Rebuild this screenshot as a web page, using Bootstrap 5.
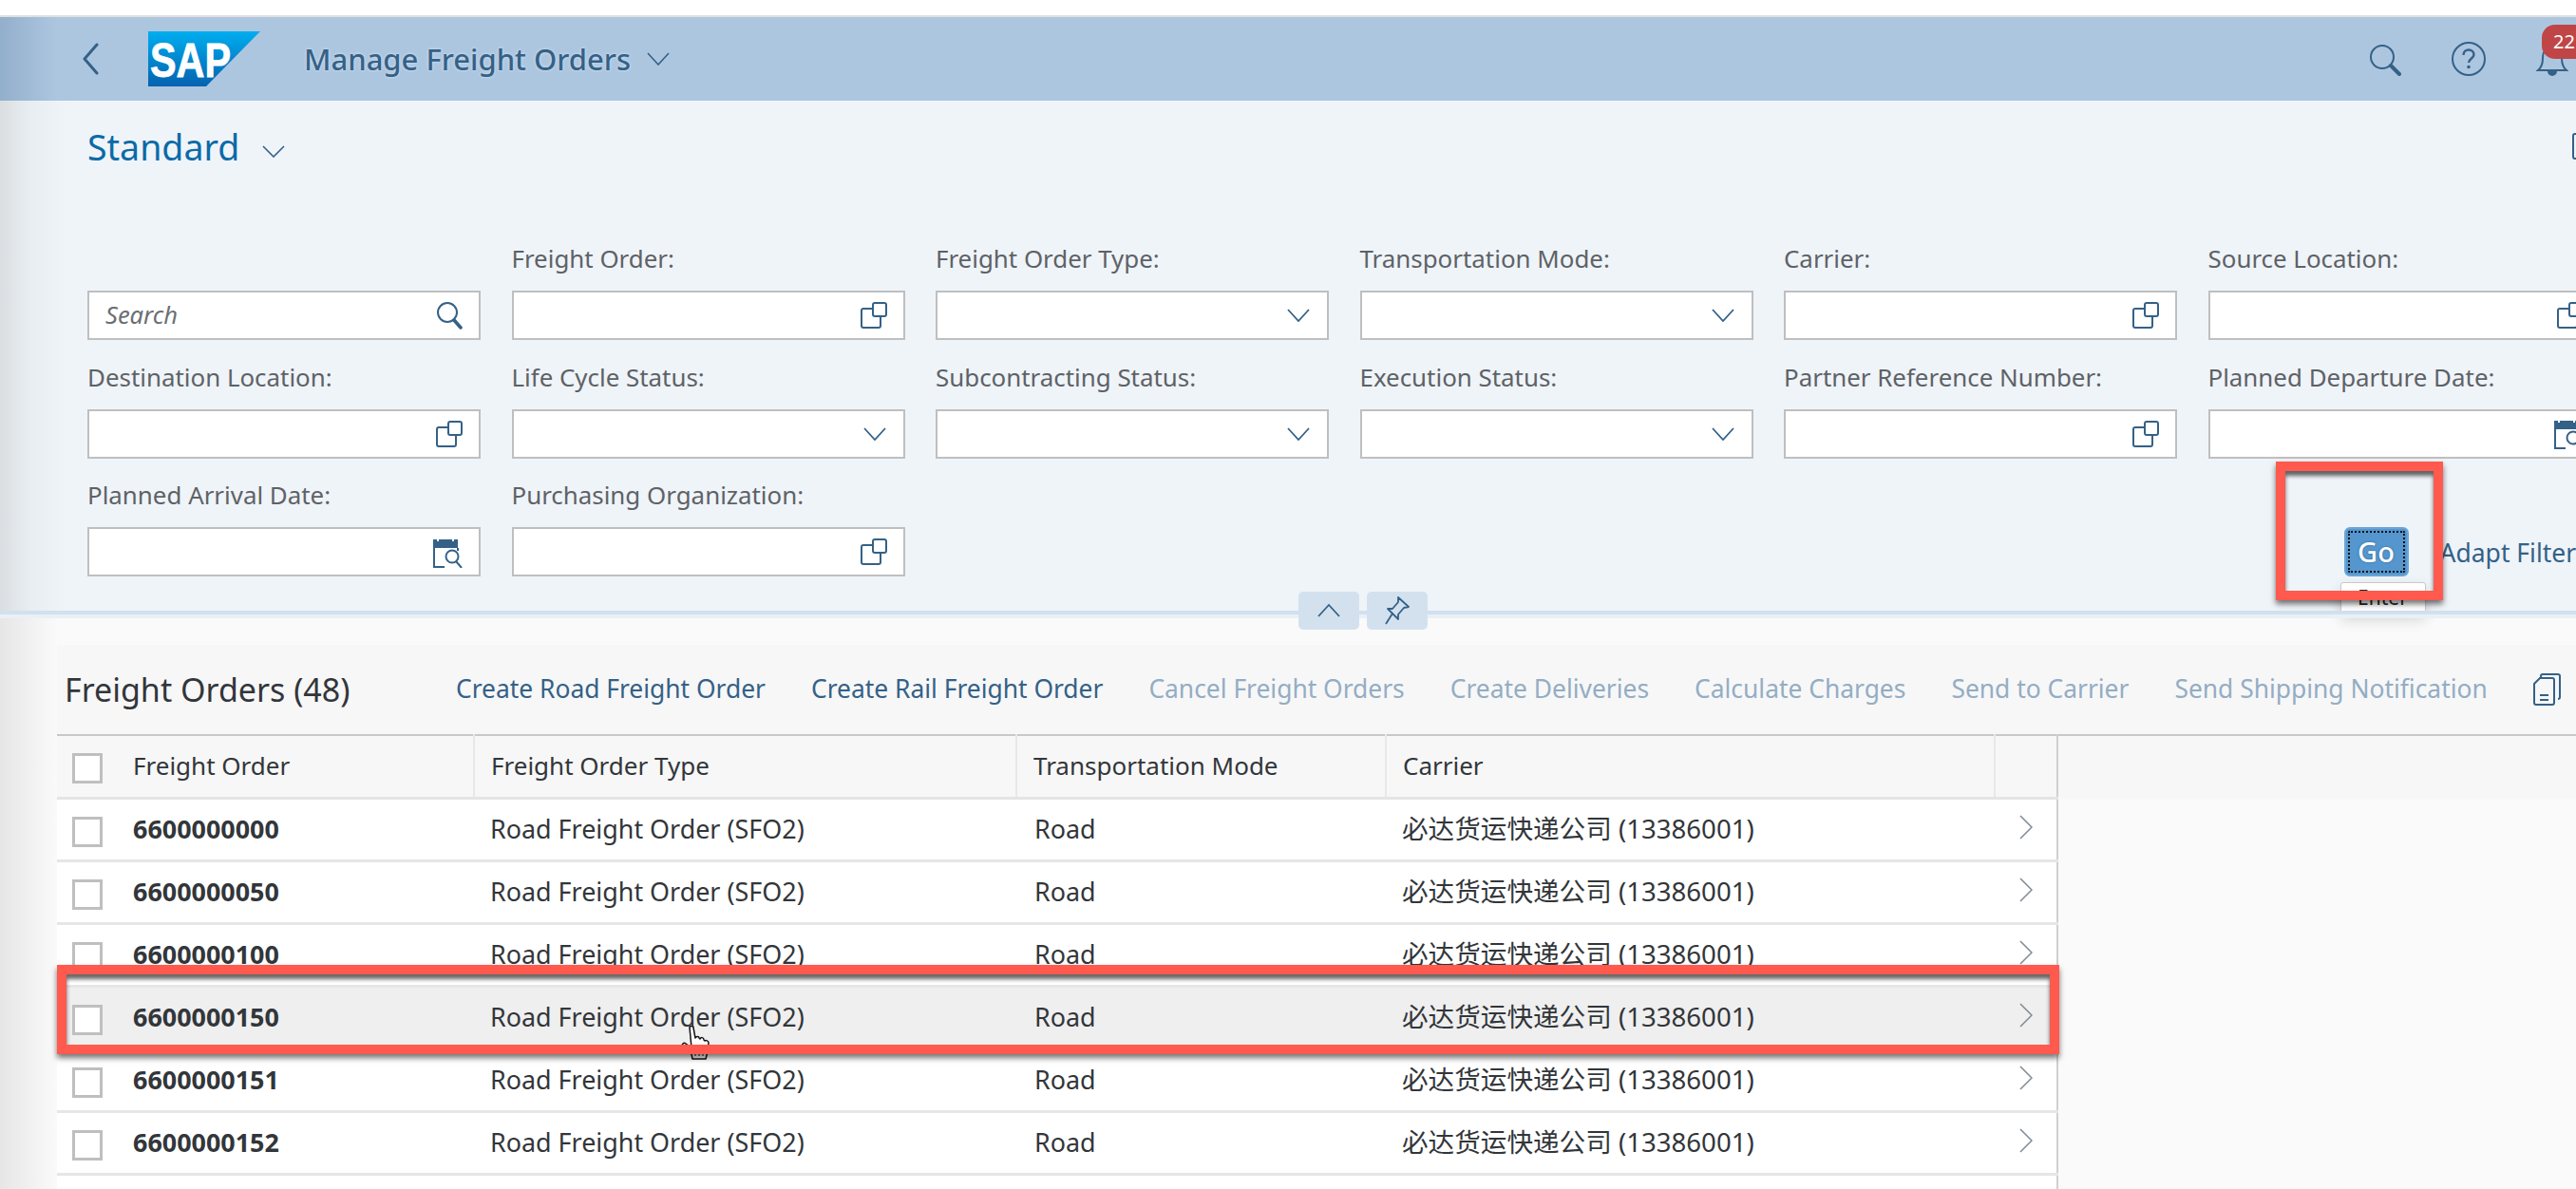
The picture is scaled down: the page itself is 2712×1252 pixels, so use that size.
<!DOCTYPE html>
<html lang="en">
<head>
    <meta charset="UTF-8">
    <title>Manage Freight Orders</title>
    <link rel="stylesheet" href="https://cdn.jsdelivr.net/npm/bootstrap@5.3.0/dist/css/bootstrap.min.css">
    <style>
        html, body { margin: 0; height: 100%; overflow: hidden; background: #fff; }
        body { width: 2712px; height: 1252px; position: relative; font-family: "Noto Sans", "Noto Sans CJK SC", sans-serif; font-size: 26px; color: #32363a; }
        .top-gap { height: 18px; background: #fff; border-bottom: 2px solid #e0e0e0; }
        .shell-bar { height: 88px; background: linear-gradient(90deg, #92afcb 0, #adc6e0 60px); padding-left: 84px; }
        .shell-logo { margin-left: 48px; }
        .shell-title { color: #346187; font-size: 31px; font-weight: 500; margin-left: 46px; text-shadow: 0 0 3px #dce8f3; }
        .shell-right { margin-left: auto; position: relative; width: 260px; height: 88px; }
        .filter-area { height: 537px; background: linear-gradient(90deg, #dadee1 0, #e8edf1 30px, #eff4f9 70px); padding-left: 92px; position: relative; z-index: 2; }
        .variant-row { height: 78px; padding-top: 20px; color: #0b6aa8; font-size: 37.500px; line-height: 62px; }
        .filter-grid { display: grid; grid-template-columns: repeat(6, 414px); column-gap: 32.500px; width: 2800px; margin-top: 70px; grid-auto-rows: 124.500px; }
        .filter-cell { position: relative; height: 104px; }
        .filter-label { height: 52px; font-size: 25.900px; line-height: 36px; color: #5e6266; white-space: nowrap; }
        .filter-box { height: 52px; background: #fff; border: 2px solid #bfbfbf; padding: 0 17px; }
        .search-hint { font-style: italic; color: #6b6f73; font-size: 25.500px; line-height: 44px; height: 46px; }
        .go-cell { padding-top: 52px; padding-left: 143px; width: 500px; white-space: nowrap; }
        .go-btn { width: 68px; height: 52px; background: #5496cd; border: 2px solid #6aa6d8; border-radius: 6px; color: #fff; font-size: 29px; font-weight: 500; line-height: 44px; padding: 0; outline: 2px dotted #101010; outline-offset: -6px; text-shadow: 0 0 2px #2a5d8b; }
        .adapt-link { color: #346187; margin-left: 33px; font-size: 26.500px; }
        .tip-box { position: absolute; left: 139px; top: 110px; width: 90px; height: 34px; background: #fff; border: 1px solid #c8c8c8; border-radius: 3px; text-align: center; font-size: 21px; line-height: 31px; color: #222; box-shadow: 0 6px 14px rgba(0,0,0,.15); }
        .split-line { height: 8px; background: linear-gradient(#d2e0ef 0 4px, #e9f0f7 4px); position: relative; z-index: 3; }
        .split-btns { position: absolute; left: 1367px; top: -20px; gap: 8px; }
        .split-btn { width: 64px; height: 40px; background: #d3e1ef; border-radius: 5px; }
        .content-area { height: 601px; background: linear-gradient(90deg, #e6e6e6 0, #fafafa 60px); padding: 28px 0 0 60px; position: relative; }
        .tool-bar { height: 94px; background: #f7f7f7; padding-left: 8px; white-space: nowrap; overflow: hidden; }
        .list-title { font-size: 34px; color: #32363a; width: 412px; flex: none; }
        .tool-btn { color: #346187; margin-right: 48px; flex: none; font-size: 26.400px; }
        .tool-btn.is-off { color: #93adc4; }
        .list-wrap { align-items: flex-start; }
        .list-table { width: 2106px; flex: none; table-layout: fixed; border-collapse: collapse; margin: 0; border-top: 2px solid #c8c8c8; }
        .list-table th, .list-table td { padding: 0 0 0 17px; vertical-align: middle; font-weight: 400; white-space: nowrap; box-shadow: none; color: #32363a; }
        .list-table th { height: 66px; background: #f7f7f7; border-bottom: 3px solid #e4e4e4; border-right: 2px solid #e8e8e8; }
        .list-table td { height: 66px; background: #fff; border-bottom: 3px solid #e6e6e6; border-right: 0; font-size: 26.900px; }
        .list-table tr > :last-child { border-right: 2px solid #d0d0d0; }
        .list-table td.id-cell, .list-table th.id-cell { padding-left: 16px; }
        .list-table tr.row-hover td { background: #efefef; }
        .list-table td.carrier-cell { font-size: 27.600px; }
        .list-table td.road-cell { padding-left: 19px; }
        .list-table td.arrow-cell { padding-left: 26px; }
        .arrow-icon { margin-bottom: 9px; }
        .check-box { display: inline-block; width: 32px; height: 32px; background: #fff; border: 3px solid #bfbfbf; vertical-align: middle; margin-right: 32px; }
        .order-id { font-weight: 700; }
        .head-filler { flex: 1; height: 68px; background: #f7f7f7; border-top: 2px solid #c8c8c8; }
        .red-frame { position: absolute; border: 10px solid #ff5a4d; box-shadow: 0 4px 6px rgba(0,0,0,.55), inset 0 5px 4px rgba(0,0,0,.6); z-index: 5; pointer-events: none; }
        .frame-go { left: 2396px; top: 486px; width: 176px; height: 146px; }
        .frame-row { left: 60px; top: 1016px; width: 2108px; height: 94px; }
        .hand-cursor { position: absolute; left: 717px; top: 1080px; z-index: 4; }
    </style>
</head>
<body>
    <div class="top-gap"></div>

    <!-- shell header -->
    <div class="shell-bar d-flex align-items-center">
        <svg width="24" height="34" viewBox="0 0 24 34" fill="none" stroke="#346187" stroke-width="3" stroke-linecap="round" stroke-linejoin="round"><path d="M18 2 5 17l13 15"/></svg>
        <svg class="shell-logo" width="118" height="58" viewBox="0 0 118 58">
            <defs><linearGradient id="sapGrad" x1="0" y1="0" x2="0" y2="1"><stop offset="0" stop-color="#00aeef"/><stop offset="1" stop-color="#0562b0"/></linearGradient></defs>
            <polygon points="0,0 118,0 61,58 0,58" fill="url(#sapGrad)"/>
            <text x="2" y="48" font-family="Liberation Sans" font-weight="700" font-size="50" fill="#fff" stroke="#fff" stroke-width=".8" textLength="85" lengthAdjust="spacingAndGlyphs">SAP</text>
        </svg>
        <span class="shell-title">Manage Freight Orders</span>
        <svg class="ms-3" width="26" height="14" viewBox="0 0 26 14" fill="none" stroke="#346187" stroke-width="1.600"><path d="M2 1l11 12L24 1"/></svg>
        <div class="shell-right">
            <svg class="position-absolute" style="left:42px;top:28px" width="34" height="34" viewBox="0 0 34 34" fill="none" stroke="#346187" stroke-width="2"><circle cx="14" cy="14" r="12"/><path d="M23 23l9 9" stroke-width="4" stroke-linecap="round"/></svg>
            <svg class="position-absolute" style="left:128px;top:25px" width="38" height="38" viewBox="0 0 38 38" fill="none" stroke="#346187" stroke-width="2"><circle cx="19" cy="19" r="17"/><path d="M13.500 15c0-3.500 2.500-5.500 5.500-5.500s5.500 2 5.500 5c0 4-5.500 4.500-5.500 8.500" stroke-width="2.400"/><circle cx="19" cy="27.500" r="1.800" fill="#346187" stroke="none"/></svg>
            <svg class="position-absolute" style="left:218px;top:24px" width="34" height="38" viewBox="0 0 34 38" fill="none" stroke="#346187" stroke-width="2"><path d="M2 32c4-3 5-7 5-13 0-7 4-11 10-11s10 4 10 11c0 6 1 10 5 13z"/><path d="M13 33a4 4 0 0 0 8 0" fill="#346187"/></svg>
            <span class="position-absolute text-white text-nowrap" style="left:224px;top:8px;width:60px;height:36px;padding-left:12px;background:#c04546;border-radius:14px;font-size:20px;line-height:36px">22</span>
        </div>
    </div>

    <!-- filter bar -->
    <div class="filter-area">
        <div class="variant-row d-flex align-items-center">
            <span>Standard</span>
            <svg class="ms-4 mt-2" width="24" height="13" viewBox="0 0 24 13" fill="none" stroke="#346187" stroke-width="1.600"><path d="M1 1l11 11L23 1"/></svg>
        </div>
        <svg class="position-absolute" style="left:2708px;top:34px" width="20" height="28" viewBox="0 0 20 28" fill="none" stroke="#346187" stroke-width="2"><rect x="1" y="1" width="24" height="26" rx="2"/></svg>
        <div class="filter-grid" id="filterGrid"></div>
    </div>

    <div class="split-line">
        <div class="split-btns d-flex">
            <div class="split-btn d-flex align-items-center justify-content-center">
                <svg width="26" height="16" viewBox="0 0 26 16" fill="none" stroke="#346187" stroke-width="1.800"><path d="M2 14 13 2l11 12"/></svg>
            </div>
            <div class="split-btn d-flex align-items-center justify-content-center">
                <svg width="28" height="32" viewBox="0 0 28 32" fill="none" stroke="#346187" stroke-width="1.800" stroke-linejoin="round"><path d="M15 2l11 10-5 1-6 7 0 5-11-11 5 0 6-7z"/><path d="M9 19 2 30"/></svg>
            </div>
        </div>
    </div>

    <!-- results -->
    <div class="content-area">
        <div class="tool-bar d-flex align-items-center" id="toolBar">
            <span class="list-title">Freight Orders (48)</span>
        </div>
        <div class="list-wrap d-flex">
            <table class="table list-table">
                <colgroup><col style="width:439px"><col style="width:571px"><col style="width:389px"><col style="width:641px"><col style="width:66px"></colgroup>
                <thead>
                    <tr>
                        <th class="id-cell"><span class="check-box"></span>Freight Order</th>
                        <th>Freight Order Type</th>
                        <th>Transportation Mode</th>
                        <th>Carrier</th>
                        <th></th>
                    </tr>
                </thead>
                <tbody id="rows"></tbody>
            </table>
            <div class="head-filler"></div>
        </div>
    </div>

    <!-- annotations over the screenshot -->
    <svg class="hand-cursor" width="32" height="36" viewBox="0 0 32 36" fill="#fff" stroke="#111" stroke-width="1.500" stroke-linejoin="round"><path d="M9 2c0-2 4-2 4 0l2 11c1-2 4-2 4 0l1 1c1-2 4-2 4 1l1 1c1-1 4 0 4 2l-1 9-2 8H12l-1-5-9-8c-2-2 1-5 3-3l6 4z"/><path d="M15 28v4M19 28v4M23 28v4" stroke-width="1"/></svg>
    <div class="red-frame frame-go"></div>
    <div class="red-frame frame-row"></div>

    <script>
        const VALUE_HELP = '<svg width="28" height="28" viewBox="0 0 28 28" fill="none" stroke="#346187" stroke-width="2"><rect x="13" y="1" width="14" height="14" rx="2"/><path d="M12 7H3a2 2 0 0 0-2 2v16a2 2 0 0 0 2 2h16a2 2 0 0 0 2-2v-9"/></svg>';
        const DROPDOWN = '<svg width="26" height="14" viewBox="0 0 26 14" fill="none" stroke="#346187" stroke-width="1.800"><path d="M2 1l11 12L24 1"/></svg>';
        const CALENDAR = '<svg width="32" height="33" viewBox="0 0 32 33" fill="none" stroke="#346187" stroke-width="2"><path d="M1 3h26v9H1z" fill="#346187" stroke="none"/><path d="M6 1v4M22 1v4" stroke="#fff"/><path d="M2 12v20h11M27 12v3"/><circle cx="21" cy="21" r="6.500"/><path d="M25 26l6 7"/></svg>';
        const SEARCH = '<svg width="28" height="30" viewBox="0 0 28 30" fill="none" stroke="#346187" stroke-width="2"><circle cx="12" cy="12" r="10"/><path d="M19 20l7 8" stroke-width="3.500" stroke-linecap="round"/></svg>';

        const fields = [
            ["", SEARCH, "Search"], ["Freight Order:", VALUE_HELP], ["Freight Order Type:", DROPDOWN], ["Transportation Mode:", DROPDOWN], ["Carrier:", VALUE_HELP], ["Source Location:", VALUE_HELP],
            ["Destination Location:", VALUE_HELP], ["Life Cycle Status:", DROPDOWN], ["Subcontracting Status:", DROPDOWN], ["Execution Status:", DROPDOWN], ["Partner Reference Number:", VALUE_HELP], ["Planned Departure Date:", CALENDAR],
            ["Planned Arrival Date:", CALENDAR], ["Purchasing Organization:", VALUE_HELP]
        ];
        let gridHtml = "";
        fields.forEach(f => {
            const hint = f[2] ? `<span class="search-hint">${f[2]}</span>` : "<span></span>";
            gridHtml += `<div class="filter-cell"><div class="filter-label">${f[0]}</div><div class="filter-box d-flex align-items-center justify-content-between">${hint}${f[1]}</div></div>`;
        });
        gridHtml += '<div></div><div></div><div></div>';
        gridHtml += '<div class="filter-cell go-cell"><button class="go-btn">Go</button><a class="adapt-link text-decoration-none">Adapt Filters</a><div class="tip-box">Enter</div></div>';
        document.getElementById("filterGrid").innerHTML = gridHtml;

        const tools = [["Create Road Freight Order", 0], ["Create Rail Freight Order", 0], ["Cancel Freight Orders", 1], ["Create Deliveries", 1], ["Calculate Charges", 1], ["Send to Carrier", 1], ["Send Shipping Notification", 1]];
        const toolBar = document.getElementById("toolBar");
        tools.forEach(t => {
            const el = document.createElement("span");
            el.className = "tool-btn" + (t[1] ? " is-off" : "");
            el.textContent = t[0];
            toolBar.appendChild(el);
        });
        toolBar.insertAdjacentHTML("beforeend", '<svg width="30" height="34" viewBox="0 0 30 34" fill="none" stroke="#346187" stroke-width="2"><path d="M8 5V3a2 2 0 0 1 2-2h16a2 2 0 0 1 2 2v22a2 2 0 0 1-2 2"/><path d="M1 11l6-6h13a2 2 0 0 1 2 2v24a2 2 0 0 1-2 2H3a2 2 0 0 1-2-2z"/><path d="M7 23h9M7 28h9"/></svg>');

        const ids = ["6600000000", "6600000050", "6600000100", "6600000150", "6600000151", "6600000152"];
        let rowsHtml = "";
        ids.forEach(id => {
            rowsHtml += `<tr class="${id === "6600000150" ? "row-hover" : ""}">
                <td class="id-cell"><span class="check-box"></span><span class="order-id">${id}</span></td>
                <td>Road Freight Order (SFO2)</td>
                <td class="road-cell">Road</td>
                <td class="carrier-cell">必达货运快递公司 (13386001)</td>
                <td class="arrow-cell"><svg class="arrow-icon" width="14" height="26" viewBox="0 0 14 26" fill="none" stroke="#7f8a94" stroke-width="1.500"><path d="M1 1l12 12L1 25"/></svg></td>
            </tr>`;
        });
        rowsHtml += '<tr><td colspan="5"></td></tr>';
        document.getElementById("rows").innerHTML = rowsHtml;
    </script>
    <script src="https://cdn.jsdelivr.net/npm/bootstrap@5.3.0/dist/js/bootstrap.bundle.min.js"></script>
</body>
</html>
